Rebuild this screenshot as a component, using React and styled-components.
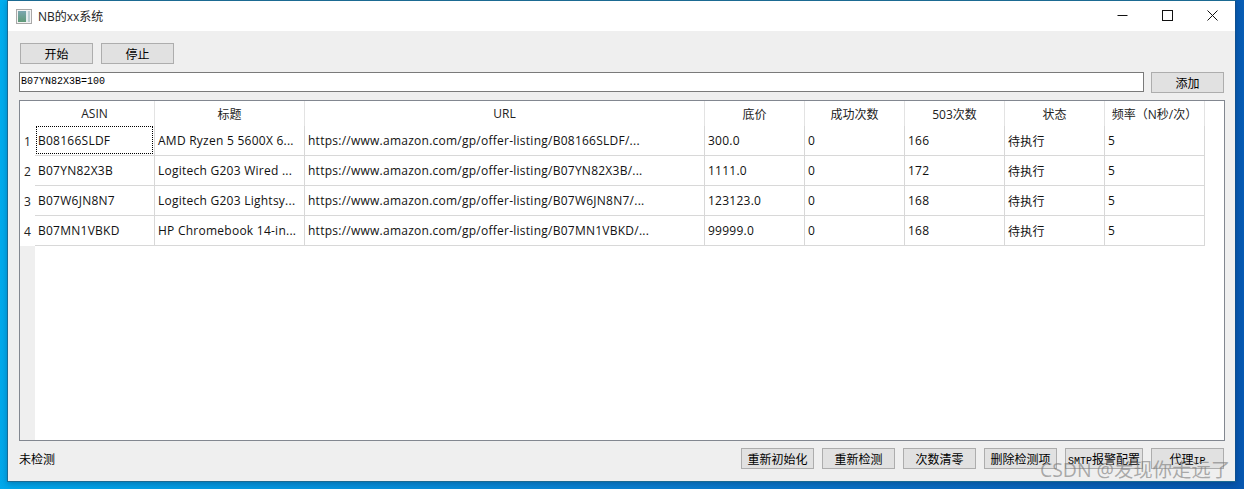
import React from 'react';
import styled, { createGlobalStyle } from 'styled-components';

const GlobalStyle = createGlobalStyle`
  html, body {
    margin: 0;
    height: 100%;
    overflow: hidden;
  }
  body {
    font-family: "Open Sans", "Noto Sans CJK SC", sans-serif;
  }
  #root {
    height: 100%;
  }
`;

const COLUMNS = [
  { title: 'ASIN', width: 120 },
  { title: '标题', width: 150 },
  { title: 'URL', width: 400 },
  { title: '底价', width: 100 },
  { title: '成功次数', width: 100 },
  { title: '503次数', width: 100 },
  { title: '状态', width: 100 },
  { title: '频率（N秒/次）', width: 100 },
];

const ROWS = [
  ['B08166SLDF', 'AMD Ryzen 5 5600X 6...', 'https://www.amazon.com/gp/offer-listing/B08166SLDF/...', '300.0', '0', '166', '待执行', '5'],
  ['B07YN82X3B', 'Logitech G203 Wired ...', 'https://www.amazon.com/gp/offer-listing/B07YN82X3B/...', '1111.0', '0', '172', '待执行', '5'],
  ['B07W6JN8N7', 'Logitech G203 Lightsy...', 'https://www.amazon.com/gp/offer-listing/B07W6JN8N7/...', '123123.0', '0', '168', '待执行', '5'],
  ['B07MN1VBKD', 'HP Chromebook 14-in...', 'https://www.amazon.com/gp/offer-listing/B07MN1VBKD/...', '99999.0', '0', '168', '待执行', '5'],
];

const Desktop = styled.div`
  height: 489px;
  box-sizing: border-box;
  padding: 0 8px 7px 7px;
  background: linear-gradient(100deg, #00aeef 0%, #0a7fd0 55%, #0757b0 100%);
`;

const Window = styled.div`
  height: 482px;
  box-sizing: border-box;
  display: flex;
  flex-direction: column;
  background: #efefef;
  border: 1px solid #1b6a92;
  border-right-color: #0d4f8f;
  box-shadow: 0 2px 6px rgba(0, 30, 70, 0.3);
`;

const TitleBar = styled.div`
  height: 30px;
  flex: none;
  display: flex;
  align-items: center;
  background: #fff;
  padding-left: 8px;
`;

const TitleText = styled.span`
  margin-left: 6px;
  margin-top: -1px;
  font-size: 12px;
  color: #222;
`;

const WindowControls = styled.div`
  margin-left: auto;
  margin-bottom: 2px;
  display: flex;
`;

const WindowControl = styled.div`
  width: 45px;
  height: 28px;
  display: flex;
  align-items: center;
  justify-content: center;
`;

const Body = styled.div`
  flex: 1;
  display: flex;
  flex-direction: column;
  padding: 12px 10px 0 11px;
  min-height: 0;
`;

const BaseButton = styled.button`
  box-sizing: border-box;
  flex: none;
  height: 21px;
  width: ${(p) => p.$width || 73}px;
  padding: 0;
  background: #e1e1e1;
  border: 1px solid #adadad;
  font-family: "Noto Sans CJK SC", sans-serif;
  font-size: 12px;
  color: #000;
  white-space: nowrap;
`;

const Latin = styled.span`
  font-family: "Liberation Mono", monospace;
  font-size: 10px;
`;

const TopRow = styled.div`
  display: flex;
  gap: 8px;
  padding-left: 1px;
`;

const InputRow = styled.div`
  display: flex;
  margin-top: 8px;
  padding-right: 1px;
  gap: 7px;
  align-items: flex-start;
`;

const AsinInput = styled.div`
  flex: 1;
  box-sizing: border-box;
  height: 20px;
  line-height: 18px;
  background: #fff;
  border: 1px solid #7a7a7a;
  padding-left: 1px;
  font-family: "Liberation Mono", monospace;
  font-size: 10px;
  color: #000;
`;

const TableFrame = styled.div`
  margin-top: 7px;
  height: 341px;
  flex: none;
  box-sizing: border-box;
  display: flex;
  background: #fff;
  border: 1px solid #828790;
`;

const RowHeader = styled.div`
  width: 15px;
  flex: none;
  display: flex;
  flex-direction: column;
  background: #efefef;
`;

const Corner = styled.div`
  height: 25px;
  background: #fff;
`;

const RowNumber = styled.div`
  height: 30px;
  background: #fff;
  display: flex;
  align-items: center;
  justify-content: center;
  font-size: 12px;
  color: #222;
`;

const Grid = styled.div`
  flex: 1;
  min-width: 0;
`;

const GridRow = styled.div`
  display: flex;
  height: ${(p) => (p.$header ? 25 : 30)}px;
`;

const HeaderCell = styled.div`
  box-sizing: border-box;
  flex: none;
  width: ${(p) => p.$width}px;
  display: flex;
  align-items: center;
  justify-content: center;
  border-right: 1px solid #e3e3e3;
  font-size: 12px;
  color: #222;
  white-space: nowrap;
`;

const Cell = styled.div`
  position: relative;
  box-sizing: border-box;
  flex: none;
  width: ${(p) => p.$width}px;
  display: flex;
  align-items: center;
  padding-left: 3px;
  border-right: 1px solid #d8d8d8;
  border-bottom: 1px solid #d8d8d8;
  font-size: 12px;
  letter-spacing: 0.25px;
  color: #111;
  white-space: nowrap;
  overflow: hidden;
`;

const FocusRing = styled.div`
  position: absolute;
  inset: 0 1px 1px 1px;
  border: 1px dotted #000;
`;

const Footer = styled.div`
  display: flex;
  align-items: center;
  padding: 7px 1px 0 0;
`;

const StatusText = styled.span`
  font-family: "Noto Sans CJK SC", sans-serif;
  font-size: 12px;
  color: #000;
`;

const FooterButtons = styled.div`
  margin-left: auto;
  display: flex;
  gap: 8px;
`;

const Watermark = styled.div`
  position: absolute;
  left: 1040px;
  top: 458px;
  font-size: 19.4px;
  line-height: 24px;
  color: rgba(120, 120, 120, 0.6);
  white-space: nowrap;
`;

const AppIcon = () => (
  <svg width="16" height="15" viewBox="0 0 16 15">
    <defs>
      <linearGradient id="appIconFill" x1="0" y1="0" x2="0" y2="1">
        <stop offset="0" stopColor="#7aa6b0" />
        <stop offset="1" stopColor="#5f9a78" />
      </linearGradient>
    </defs>
    <rect x="0.5" y="0.5" width="15" height="14" fill="#f4f4f4" stroke="#a8a8a8" />
    <rect x="2" y="2" width="8" height="11" fill="url(#appIconFill)" />
    <rect x="10" y="2" width="2" height="11" fill="#e4ecee" />
    <rect x="12" y="2" width="2" height="11" fill="#b9ccd0" />
  </svg>
);

const App = () => (
  <Desktop>
    <GlobalStyle />
    <Window>
      <TitleBar>
        <AppIcon />
        <TitleText>NB的xx系统</TitleText>
        <WindowControls>
          <WindowControl>
            <svg width="11" height="11" viewBox="0 0 11 11"><path d="M0.5 5.5H10.5" stroke="#111" /></svg>
          </WindowControl>
          <WindowControl>
            <svg width="11" height="11" viewBox="0 0 11 11"><rect x="0.5" y="0.5" width="10" height="10" fill="none" stroke="#111" /></svg>
          </WindowControl>
          <WindowControl>
            <svg width="11" height="11" viewBox="0 0 11 11"><path d="M0.5 0.5L10.5 10.5M10.5 0.5L0.5 10.5" stroke="#111" /></svg>
          </WindowControl>
        </WindowControls>
      </TitleBar>
      <Body>
        <TopRow>
          <BaseButton>开始</BaseButton>
          <BaseButton>停止</BaseButton>
        </TopRow>
        <InputRow>
          <AsinInput>B07YN82X3B=100</AsinInput>
          <BaseButton>添加</BaseButton>
        </InputRow>
        <TableFrame>
          <RowHeader>
            <Corner />
            {ROWS.map((_, i) => <RowNumber key={i}>{i + 1}</RowNumber>)}
          </RowHeader>
          <Grid>
            <GridRow $header>
              {COLUMNS.map((c) => <HeaderCell key={c.title} $width={c.width}>{c.title}</HeaderCell>)}
            </GridRow>
            {ROWS.map((row, r) => (
              <GridRow key={row[0]}>
                {row.map((text, c) => (
                  <Cell key={c} $width={COLUMNS[c].width}>
                    {r === 0 && c === 0 && <FocusRing />}
                    {text}
                  </Cell>
                ))}
              </GridRow>
            ))}
          </Grid>
        </TableFrame>
        <Footer>
          <StatusText>未检测</StatusText>
          <FooterButtons>
            <BaseButton>重新初始化</BaseButton>
            <BaseButton>重新检测</BaseButton>
            <BaseButton>次数清零</BaseButton>
            <BaseButton>删除检测项</BaseButton>
            <BaseButton $width={78}><Latin>SMTP</Latin>报警配置</BaseButton>
            <BaseButton>代理<Latin>IP</Latin></BaseButton>
          </FooterButtons>
        </Footer>
      </Body>
    </Window>
    <Watermark>CSDN @发现你走远了</Watermark>
  </Desktop>
);

export default App;
